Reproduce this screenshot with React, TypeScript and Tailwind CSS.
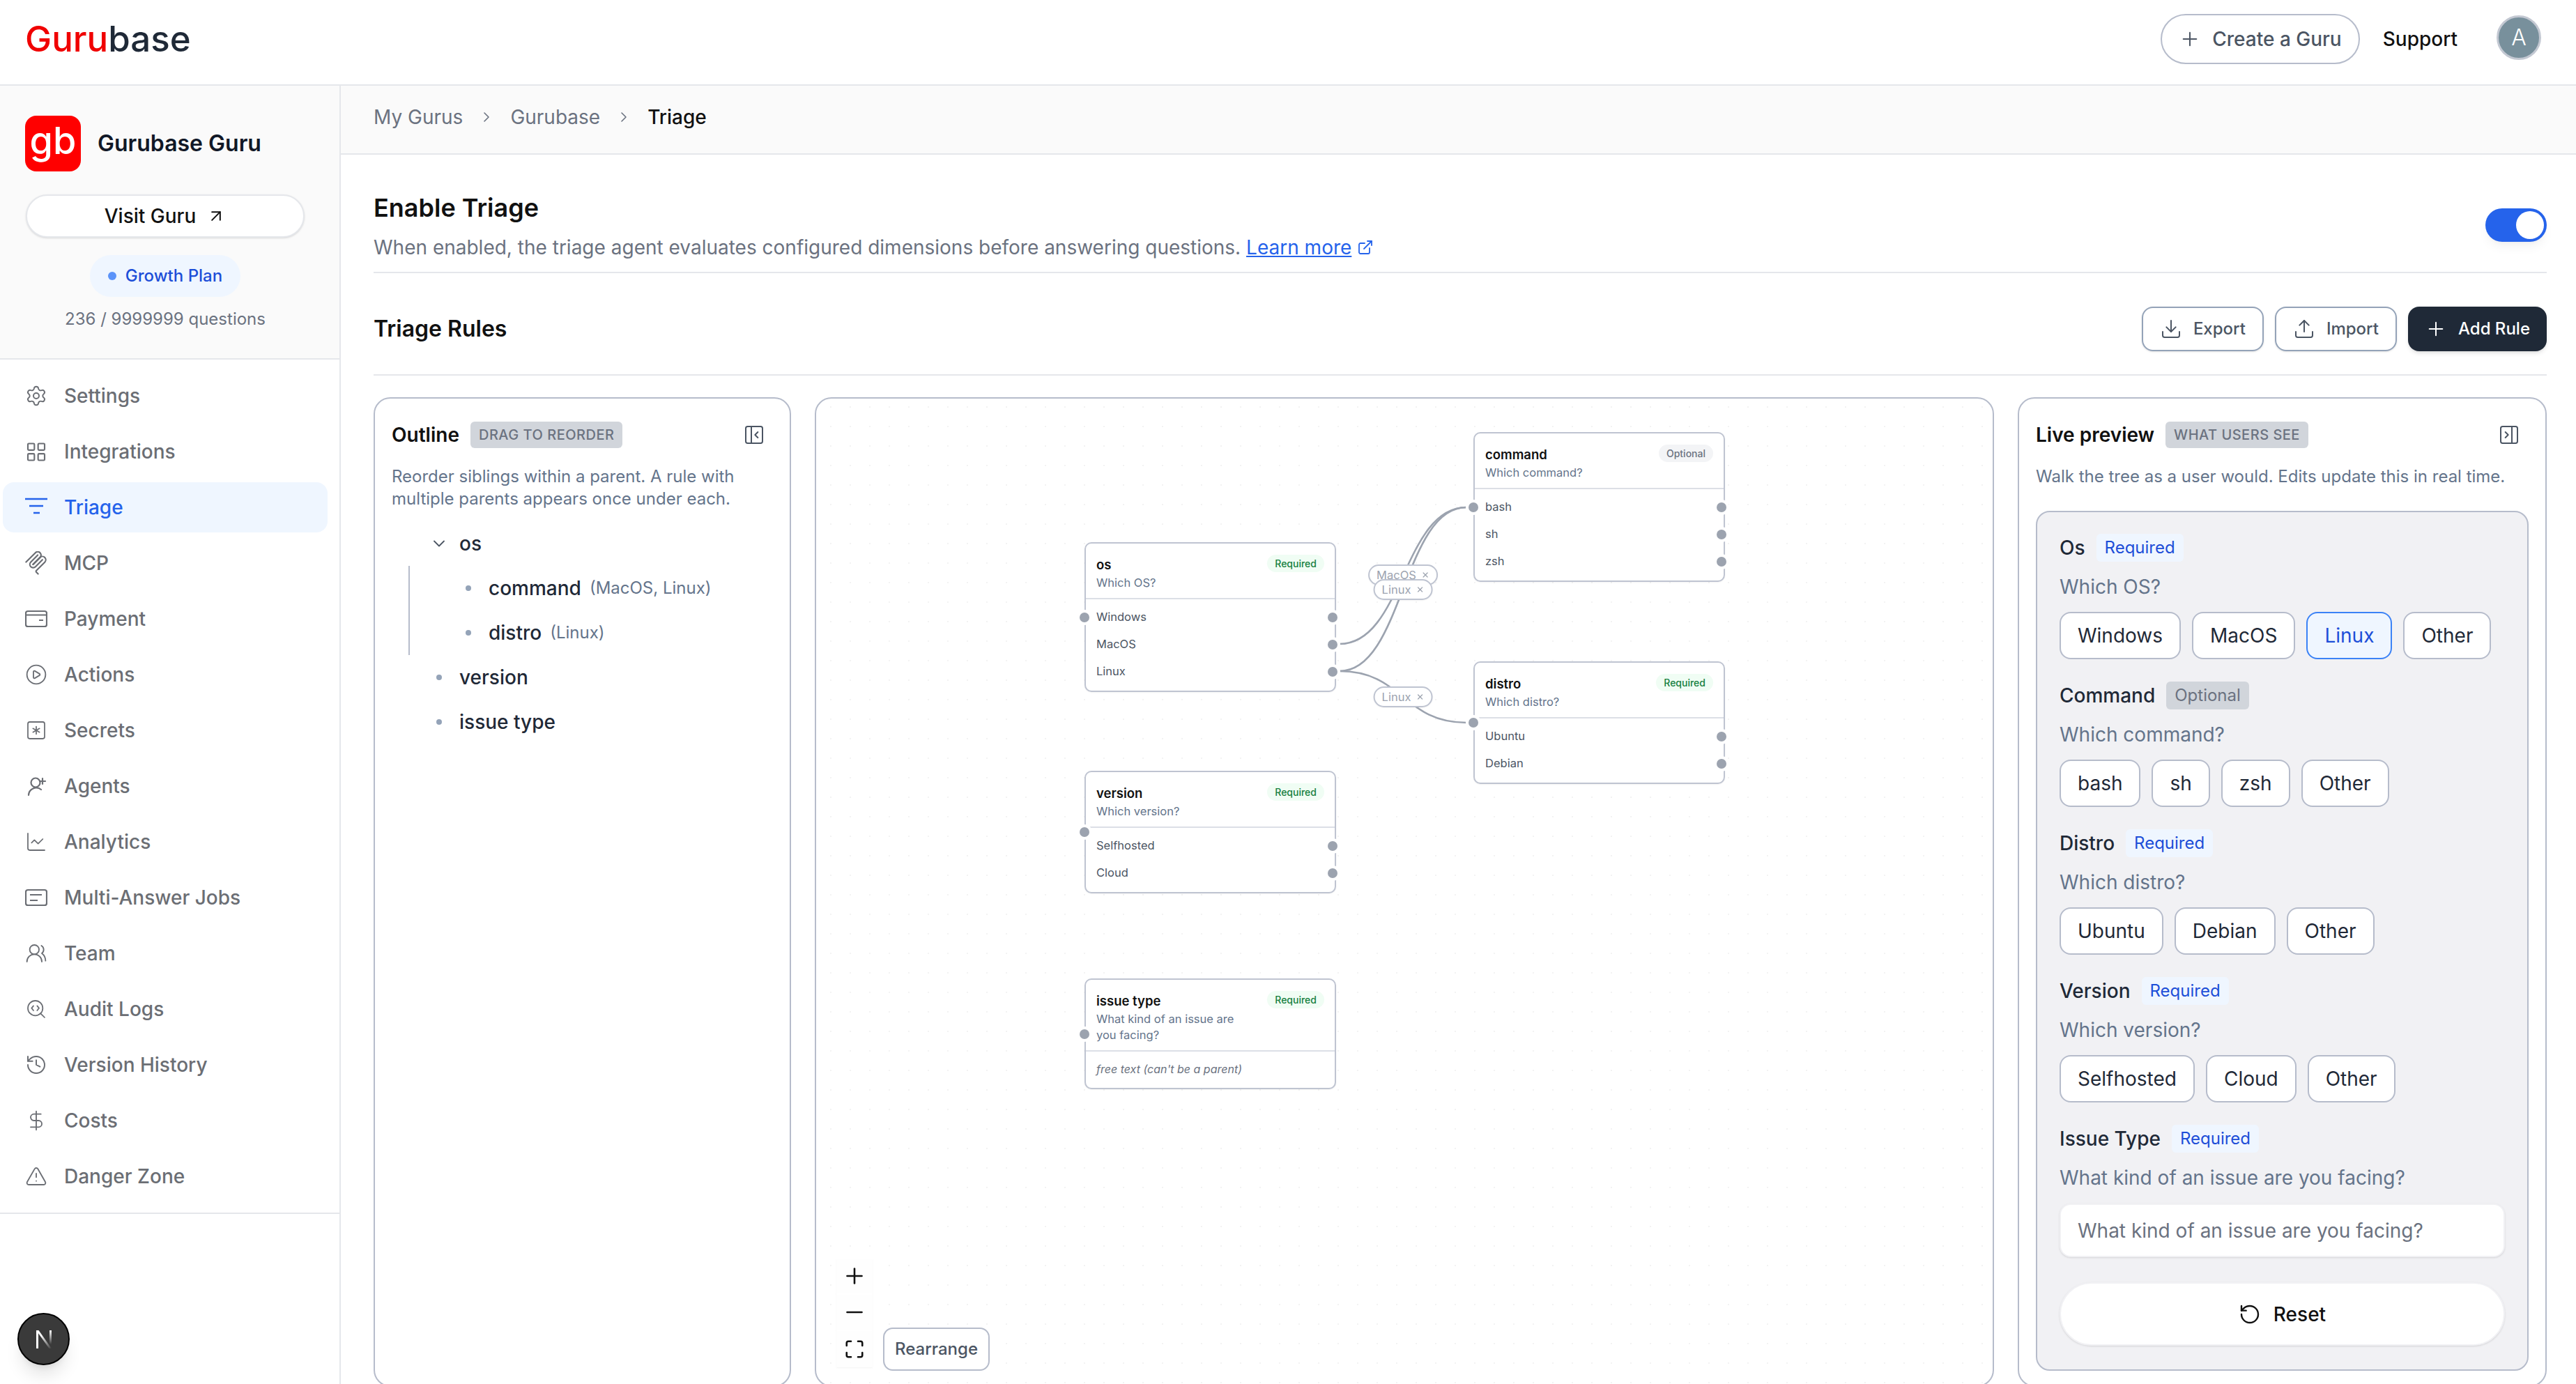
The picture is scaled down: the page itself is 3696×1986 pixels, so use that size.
import type { ReactNode } from 'react';
import {
  ArrowUpRight,
  ChartLine,
  ChevronDown,
  ChevronRight,
  CirclePlay,
  DollarSign,
  Download,
  ExternalLink,
  History,
  LayoutGrid,
  Maximize,
  Minus,
  PanelLeftClose,
  PanelRightClose,
  Plus,
  RotateCcw,
  SearchCode,
  Settings,
  SquareAsterisk,
  TriangleAlert,
  Upload,
  UsersRound,
  X,
} from 'lucide-react';

const FilterIcon = () => (
  <svg width="32" height="32" viewBox="0 0 32 32" fill="none" stroke="currentColor" strokeWidth="2.4">
    <path d="M0 4h32M6 14h20M12 24h9" />
  </svg>
);

const McpIcon = () => (
  <svg width="34" height="34" viewBox="12 6 160 172" fill="none" stroke="currentColor" strokeWidth="11" strokeLinecap="round">
    <path d="M18 84.85L85.88 16.97C95.25 7.6 110.45 7.6 119.82 16.97C129.2 26.34 129.2 41.54 119.82 50.91L68.56 102.18" />
    <path d="M69.27 101.47L119.82 50.91C129.2 41.54 144.39 41.54 153.77 50.91L154.12 51.27C163.49 60.64 163.49 75.83 154.12 85.21L92.72 146.6C89.6 149.72 89.6 154.79 92.72 157.91L105.33 170.52" />
    <path d="M102.85 33.94L52.65 84.15C43.28 93.52 43.28 108.71 52.65 118.09C62.02 127.46 77.22 127.46 86.59 118.09L136.79 67.88" />
  </svg>
);

const WalletIcon = () => (
  <svg width="32" height="32" viewBox="0 0 32 32" fill="none" stroke="currentColor" strokeWidth="2.2">
    <rect x="1" y="5" width="30" height="22" rx="3" />
    <path d="M1 10.5h30M20 18h6" />
  </svg>
);

const AgentIcon = () => (
  <svg width="32" height="32" viewBox="0 0 32 32" fill="none" stroke="currentColor" strokeWidth="2.2" strokeLinecap="round">
    <circle cx="15" cy="11" r="6.5" />
    <path d="M5 29a11 11 0 0 1 18-8M25 5v8M21 9h8" />
  </svg>
);

const JobsIcon = () => (
  <svg width="32" height="32" viewBox="0 0 32 32" fill="none" stroke="currentColor" strokeWidth="2.2">
    <rect x="1" y="5" width="30" height="22" rx="3" />
    <path d="M7 12h17M7 20h11" />
  </svg>
);

const NextLogo = () => (
  <svg width="36" height="36" viewBox="0 0 36 36" fill="none">
    <defs>
      <linearGradient id="next-fade-a" x1="0" y1="0" x2="1" y2="1">
        <stop offset="0.3" stopColor="#ffffff" />
        <stop offset="1" stopColor="#ffffff" stopOpacity="0" />
      </linearGradient>
      <linearGradient id="next-fade-b" x1="0" y1="0" x2="0" y2="1">
        <stop offset="0" stopColor="#ffffff" />
        <stop offset="1" stopColor="#ffffff" stopOpacity="0" />
      </linearGradient>
    </defs>
    <path d="M7 5h3v26H7z" fill="#ffffff" />
    <path d="M7 5h3.5L29 31h-3.5z" fill="url(#next-fade-a)" />
    <path d="M26 5h3v20h-3z" fill="url(#next-fade-b)" />
  </svg>
);

const iconProps = { strokeWidth: 2.2, absoluteStrokeWidth: true };

const navItems: { label: string; icon: ReactNode; active?: boolean }[] = [
  { label: 'Settings', icon: <Settings size={36} {...iconProps} /> },
  { label: 'Integrations', icon: <LayoutGrid size={33} {...iconProps} /> },
  { label: 'Triage', icon: <FilterIcon />, active: true },
  { label: 'MCP', icon: <McpIcon /> },
  { label: 'Payment', icon: <WalletIcon /> },
  { label: 'Actions', icon: <CirclePlay size={38} {...iconProps} /> },
  { label: 'Secrets', icon: <SquareAsterisk size={40} {...iconProps} /> },
  { label: 'Agents', icon: <AgentIcon /> },
  { label: 'Analytics', icon: <ChartLine size={40} {...iconProps} /> },
  { label: 'Multi-Answer Jobs', icon: <JobsIcon /> },
  { label: 'Team', icon: <UsersRound size={38} {...iconProps} /> },
  { label: 'Audit Logs', icon: <SearchCode size={40} {...iconProps} /> },
  { label: 'Version History', icon: <History size={36} {...iconProps} /> },
  { label: 'Costs', icon: <DollarSign size={38} {...iconProps} /> },
  { label: 'Danger Zone', icon: <TriangleAlert size={38} {...iconProps} /> },
];

const previewSections: { name: string; required: boolean; question: string; options: string[] }[] = [
  { name: 'Os', required: true, question: 'Which OS?', options: ['Windows', 'MacOS', 'Linux', 'Other'] },
  { name: 'Command', required: false, question: 'Which command?', options: ['bash', 'sh', 'zsh', 'Other'] },
  { name: 'Distro', required: true, question: 'Which distro?', options: ['Ubuntu', 'Debian', 'Other'] },
  { name: 'Version', required: true, question: 'Which version?', options: ['Selfhosted', 'Cloud', 'Other'] },
];

function Sidebar() {
  return (
    <aside className="w-[489px] shrink-0 border-r-2 border-[#e5e7eb] flex flex-col">
      {/* Guru card */}
      <div className="h-[393px] bg-[#fafafa] border-b-2 border-[#e5e7eb] pl-9 pt-[43px]">
        <div className="w-[402px] flex flex-col items-center">
          <div className="w-full flex items-center gap-6">
            <div className="w-20 h-20 rounded-2xl bg-[#ff0000] flex items-center justify-center text-white text-[54px] font-medium leading-none pb-2">
              gb
            </div>
            <span className="text-[32px] font-semibold text-[#111827]">Gurubase Guru</span>
          </div>
          <button className="mt-[33px] w-[400px] h-[62px] rounded-full bg-white border-2 border-[#e5e7eb] shadow-sm flex items-center justify-center gap-[15px] text-[28px] font-medium text-[#111111]">
            Visit Guru
            <ArrowUpRight size={28} strokeWidth={2} absoluteStrokeWidth />
          </button>
          <div className="mt-[25px] h-[60px] rounded-full bg-[#eff6ff] px-[26px] flex items-center gap-[13px] text-2xl font-medium text-[#1d4ed8]">
            <span className="w-3 h-3 rounded-full bg-[#5b93f9]" />
            Growth Plan
          </div>
          <div className="mt-4 leading-8 text-2xl text-[#6b7280]">236 / 9999999 questions</div>
        </div>
      </div>

      {/* Nav */}
      <nav className="pt-4 pb-4 pl-1 pr-[17px] flex flex-col gap-2 border-b-2 border-[#e5e7eb]">
        {navItems.map((item) => (
          <div
            key={item.label}
            className={
              item.active
                ? 'h-[72px] rounded-2xl bg-[#eff6ff] pl-8 flex items-center gap-6 text-[28px] font-medium text-[#2563eb]'
                : 'h-[72px] rounded-2xl pl-8 flex items-center gap-6 text-[28px] font-medium text-[#6b6e74]'
            }
          >
            <span className="w-8 h-8 flex items-center justify-center shrink-0">{item.icon}</span>
            {item.label}
          </div>
        ))}
      </nav>
    </aside>
  );
}

function OutlineRow({ label, meta, indent }: { label: string; meta?: string; indent: string }) {
  return (
    <div className={`h-16 flex items-center ${indent}`}>
      <span className="w-7 h-7 flex items-center justify-center mr-[15px] shrink-0">
        <span className="w-2 h-2 rounded-full bg-[#94a3b8]" />
      </span>
      <span className="text-[28px] font-medium text-[#1f2937]">{label}</span>
      {meta && <span className="ml-3 text-2xl text-[#64748b]">{meta}</span>}
    </div>
  );
}

function OutlinePanel() {
  return (
    <section className="w-[599px] h-[1420px] shrink-0 rounded-3xl border-2 border-[#b6bccb] px-6 pt-[33px]">
      <div className="h-[38px] flex items-center gap-4">
        <h3 className="text-[28px] font-semibold text-[#111111]">Outline</h3>
        <span className="h-[38px] px-3 rounded-md bg-[#d1d5db] text-[#6b7280] text-[20px] font-medium tracking-[0.025em] flex items-center">
          DRAG TO REORDER
        </span>
        <PanelLeftClose size={32} strokeWidth={2} absoluteStrokeWidth className="ml-auto mr-[11px] text-[#4b5563]" />
      </div>
      <p className="mt-[25px] text-2xl leading-8 text-[#64748b]">
        Reorder siblings within a parent. A rule with multiple parents appears once under each.
      </p>
      <div className="mt-5">
        <div className="h-[60px] pb-1 flex items-center ml-[54px]">
          <span className="w-7 h-7 flex items-center justify-center mr-[15px] text-[#4b5563]">
            <ChevronDown size={28} strokeWidth={1.8} absoluteStrokeWidth />
          </span>
          <span className="text-[28px] font-medium text-[#1f2937]">os</span>
        </div>
        <div className="ml-6 border-l-2 border-[#b6bccb] h-[128px]">
          <OutlineRow label="command" meta="(MacOS, Linux)" indent="ml-[70px]" />
          <OutlineRow label="distro" meta="(Linux)" indent="ml-[70px]" />
        </div>
        <OutlineRow label="version" indent="ml-[54px]" />
        <OutlineRow label="issue type" indent="ml-[54px]" />
      </div>
    </section>
  );
}

function Handle({ side }: { side: 'left' | 'right' }) {
  return (
    <span
      className={
        side === 'left'
          ? 'absolute top-1/2 -translate-y-1/2 -left-[9px] w-3.5 h-3.5 rounded-full bg-[#9ca3af] ring-4 ring-white'
          : 'absolute top-1/2 -translate-y-1/2 -right-1 w-3.5 h-3.5 rounded-full bg-[#9ca3af] ring-4 ring-white'
      }
    />
  );
}

function FlowNode({
  title,
  question,
  badge,
  options,
  pos,
  freeText,
}: {
  title: string;
  question: string;
  badge: 'Required' | 'Optional';
  options?: string[];
  pos: string;
  freeText?: string;
}) {
  return (
    <div className={`absolute w-[361px] rounded-[10px] bg-white border-2 border-[#bfc4d1] shadow-xs ${pos}`}>
      <Handle side="left" />
      <div className="px-[15px] pt-[16px] pb-[10px] border-b-2 border-[#dcdfe6]">
        <div className="flex items-start justify-between">
          <div>
            <div className="text-[18.5px] leading-6 mt-0.5 font-semibold text-[#111111]">{title}</div>
            <div className="mt-[3px] w-[220px] text-[16.5px] leading-[23px] text-[#64748b]">{question}</div>
          </div>
          <span
            className={
              badge === 'Required'
                ? 'h-[25px] px-[11px] rounded-full bg-[#f0fdf4] text-[14px] font-medium text-[#15803d] flex items-center'
                : 'h-[25px] px-[11px] rounded-full bg-[#f3f4f6] text-[14px] font-medium text-[#6b7280] flex items-center'
            }
          >
            {badge}
          </span>
        </div>
      </div>
      {freeText ? (
        <div className="pt-1.5 pb-2 px-[15px] h-[52px] flex items-center text-[16px] italic text-[#6b7280]">{freeText}</div>
      ) : (
        <div className="pt-1.5 pb-2">
          {options?.map((opt) => (
            <div key={opt} className="relative h-[39px] px-[15px] flex items-center text-[16.5px] text-[#4b5563]">
              {opt}
              <Handle side="right" />
            </div>
          ))}
        </div>
      )}
    </div>
  );
}

function EdgeLabel({ text, pos }: { text: string; pos: string }) {
  return (
    <div
      className={`absolute -translate-x-1/2 -translate-y-1/2 h-[30px] px-[10px] rounded-full bg-white border-2 border-[#bfc4d1] shadow-xs flex items-center gap-[7px] text-[16.5px] text-[#9ca3af] ${pos}`}
    >
      {text}
      <X size={12} strokeWidth={1.2} absoluteStrokeWidth className="text-[#9ca3af]" />
    </div>
  );
}

function CanvasPanel() {
  return (
    <section className="relative flex-1 h-[1420px] rounded-3xl border-2 border-[#b6bccb] overflow-hidden bg-white bg-[radial-gradient(#f3f3f3_1.5px,transparent_1.5px)] bg-[length:28px_28px] bg-[position:7px_-2px]">
      {/* Edges */}
      <svg className="absolute inset-0 w-full h-full" fill="none" stroke="#9ca3af" strokeWidth="2.6">
        <path d="M751 352C842 352 842 156 933 156" />
        <path d="M751 391C842 391 842 156 933 156" />
        <path d="M751 391C842 391 842 465 933 465" />
      </svg>

      <FlowNode pos="left-[385px] top-[206px]" title="os" question="Which OS?" badge="Required" options={['Windows', 'MacOS', 'Linux']} />
      <FlowNode pos="left-[943px] top-[48px]" title="command" question="Which command?" badge="Optional" options={['bash', 'sh', 'zsh']} />
      <FlowNode pos="left-[943px] top-[377px]" title="distro" question="Which distro?" badge="Required" options={['Ubuntu', 'Debian']} />
      <FlowNode pos="left-[385px] top-[534px]" title="version" question="Which version?" badge="Required" options={['Selfhosted', 'Cloud']} />
      <FlowNode
        pos="left-[385px] top-[832px]"
        title="issue type"
        question="What kind of an issue are you facing?"
        badge="Required"
        freeText="free text (can't be a parent)"
      />

      <EdgeLabel text="MacOS" pos="left-[842px] top-[253px]" />
      <EdgeLabel text="Linux" pos="left-[842px] top-[274px]" />
      <EdgeLabel text="Linux" pos="left-[842px] top-[428px]" />

      {/* Zoom controls */}
      <div className="absolute left-[29px] top-[1234px] flex flex-col gap-0.5 shadow-xs text-[#111111]">
        <button className="w-[52px] h-[50px] bg-[#fefefe] flex items-center justify-center">
          <Plus size={36} strokeWidth={2.6} absoluteStrokeWidth />
        </button>
        <button className="w-[52px] h-[50px] bg-[#fefefe] flex items-center justify-center">
          <Minus size={36} strokeWidth={2.6} absoluteStrokeWidth />
        </button>
        <button className="w-[52px] h-[52px] bg-[#fefefe] flex items-center justify-center">
          <Maximize size={30} strokeWidth={2.6} absoluteStrokeWidth />
        </button>
      </div>
      <button className="absolute left-[96px] top-[1333px] w-[153px] h-[62px] rounded-[14px] bg-white border-2 border-[#b6bccb] text-2xl font-medium text-[#4b5563]">
        Rearrange
      </button>
    </section>
  );
}

function Tag({ required }: { required: boolean }) {
  return (
    <span
      className={
        required
          ? 'h-10 px-3 rounded-md bg-[#eff6ff] text-2xl text-[#1d4ed8] flex items-center'
          : 'h-10 px-3 rounded-md bg-[#d1d5db] text-2xl text-[#6b7280] flex items-center'
      }
    >
      {required ? 'Required' : 'Optional'}
    </span>
  );
}

function PreviewPanel() {
  return (
    <section className="w-[759px] h-[1420px] shrink-0 rounded-3xl border-2 border-[#b6bccb] px-6 pt-[33px]">
      <div className="h-[38px] flex items-center gap-4">
        <h3 className="text-[28px] font-semibold text-[#111111]">Live preview</h3>
        <span className="h-[38px] px-3 rounded-md bg-[#d1d5db] text-[#6b7280] text-[20px] font-medium tracking-[0.025em] flex items-center">
          WHAT USERS SEE
        </span>
        <PanelRightClose size={32} strokeWidth={2} absoluteStrokeWidth className="ml-auto mr-3 text-[#4b5563]" />
      </div>
      <p className="mt-[25px] text-2xl leading-8 text-[#64748b]">
        Walk the tree as a user would. Edits update this in real time.
      </p>

      <div className="mt-[33px] rounded-[20px] border-2 border-[#b6bccb] bg-[#f1f1f4] px-8 pt-[31px] pb-[34px]">
        {previewSections.map((section) => (
          <div key={section.name} className="mb-8">
            <div className="h-10 flex items-center gap-4">
              <span className="text-[28px] font-medium text-[#1f2937]">{section.name}</span>
              <Tag required={section.required} />
            </div>
            <div className="mt-4 h-10 flex items-center text-[28px] text-[#64748b]">{section.question}</div>
            <div className="mt-4 flex gap-4">
              {section.options.map((opt) => (
                <button
                  key={opt}
                  className={
                    section.name === 'Os' && opt === 'Linux'
                      ? 'h-[68px] px-6 rounded-2xl border-2 border-[#3b82f6] bg-[#eff6ff] text-[28px] text-[#1d4ed8]'
                      : 'h-[68px] px-6 rounded-2xl border-2 border-[#b6bccb] bg-white text-[28px] text-[#1f2937]'
                  }
                >
                  {opt}
                </button>
              ))}
            </div>
          </div>
        ))}

        <div className="h-10 flex items-center gap-4">
          <span className="text-[28px] font-medium text-[#1f2937]">Issue Type</span>
          <Tag required />
        </div>
        <div className="mt-4 h-10 flex items-center text-[28px] text-[#64748b]">What kind of an issue are you facing?</div>
        <input
          type="text"
          placeholder="What kind of an issue are you facing?"
          className="mt-[17px] w-full h-[77px] px-6 rounded-2xl bg-white border-2 border-[#f1f1f4] shadow-sm text-[28px] placeholder:text-[#6b7280]"
        />
        <button className="mt-9 w-full h-[91px] rounded-full bg-white shadow-sm border-2 border-[#f1f1f4] flex items-center justify-center gap-[18px] text-[28px] font-medium text-[#111111]">
          <RotateCcw size={32} strokeWidth={2.4} absoluteStrokeWidth />
          Reset
        </button>
      </div>
    </section>
  );
}

export default function App() {
  return (
    <div className="relative w-[3696px] h-[1986px] overflow-hidden bg-white font-['Inter',sans-serif] flex flex-col">
      {/* Top bar */}
      <header className="h-[123px] shrink-0 pb-2.5 border-b-2 border-[#e5e7eb] flex items-center justify-between pl-9 pr-[50px]">
        <div className="text-[51px] font-medium leading-none">
          <span className="text-[#f00000]">Guru</span>
          <span className="text-[#1f2937]">base</span>
        </div>
        <div className="flex items-center">
          <button className="h-[72px] px-6 rounded-full border-2 border-[#b6bccb] flex items-center gap-4 text-[28px] font-medium text-[#4b5563]">
            <Plus size={32} strokeWidth={2} absoluteStrokeWidth />
            Create a Guru
          </button>
          <span className="ml-[33px] text-[28px] font-medium text-[#111111]">Support</span>
          <div className="ml-14 w-16 h-16 -mt-1 rounded-full bg-[#78909c] border-[3px] border-[#c3c8d2] flex items-center justify-center text-[32px] font-light text-white">
            A
          </div>
        </div>
      </header>

      <div className="flex flex-1 min-h-0">
        <Sidebar />

        <main className="flex-1 min-w-0">
          {/* Breadcrumb */}
          <div className="h-[99px] pb-2 bg-[#fafafa] border-b-2 border-[#e5e7eb] pl-[47px] flex items-center text-[28px] text-[#6b7280]">
            <span>My Gurus</span>
            <ChevronRight size={24} strokeWidth={1.6} absoluteStrokeWidth className="mx-[22px]" />
            <span>Gurubase</span>
            <ChevronRight size={24} strokeWidth={1.6} absoluteStrokeWidth className="mx-[22px]" />
            <span className="font-medium text-[#111111]">Triage</span>
          </div>

          <div className="pl-[47px] pr-[42px]">
            {/* Enable */}
            <div className="pt-12 pb-[15px] border-b-2 border-[#e5e7eb] flex items-center justify-between">
              <div>
                <h2 className="text-[36px] leading-[56px] font-semibold text-[#111111]">Enable Triage</h2>
                <p className="mt-[9px] text-[28px] leading-10 text-[#6b7280]">
                  When enabled, the triage agent evaluates configured dimensions before answering questions.{' '}
                  <a className="text-[#2563eb] underline">Learn more</a>
                  <ExternalLink size={24} strokeWidth={1.8} absoluteStrokeWidth className="inline ml-2 -mt-1 text-[#2563eb]" />
                </p>
              </div>
              <div className="w-[88px] h-12 rounded-full bg-[#2563eb] p-1 flex justify-end shadow-lg shadow-black/5">
                <span className="w-10 h-10 rounded-full bg-white" />
              </div>
            </div>

            {/* Rules header */}
            <div className="pt-12 pb-[33px] border-b-2 border-[#e5e7eb] flex items-center justify-between">
              <h2 className="text-[32px] font-semibold text-[#111111]">Triage Rules</h2>
              <div className="flex items-center gap-4">
                <button className="h-16 px-6 rounded-2xl border-2 border-[#94a3b8] shadow-sm flex items-center gap-4 text-2xl font-medium text-[#4b5563]">
                  <Download size={32} strokeWidth={2} absoluteStrokeWidth />
                  Export
                </button>
                <button className="h-16 px-6 rounded-2xl border-2 border-[#94a3b8] shadow-sm flex items-center gap-4 text-2xl font-medium text-[#4b5563]">
                  <Upload size={32} strokeWidth={2} absoluteStrokeWidth />
                  Import
                </button>
                <button className="h-16 px-6 rounded-2xl bg-[#1f2937] shadow-md flex items-center gap-4 text-2xl font-medium text-white">
                  <Plus size={32} strokeWidth={2} absoluteStrokeWidth />
                  Add Rule
                </button>
              </div>
            </div>

            {/* Panels */}
            <div className="mt-[31px] flex gap-[34px]">
              <OutlinePanel />
              <CanvasPanel />
              <PreviewPanel />
            </div>
          </div>
        </main>
      </div>

      {/* Dev indicator */}
      <div className="absolute left-[25px] top-[1884px] w-[75px] h-[75px] rounded-full bg-[#3a3a3a] border-2 border-black shadow-xl flex items-center justify-center">
        <NextLogo />
      </div>
    </div>
  );
}
